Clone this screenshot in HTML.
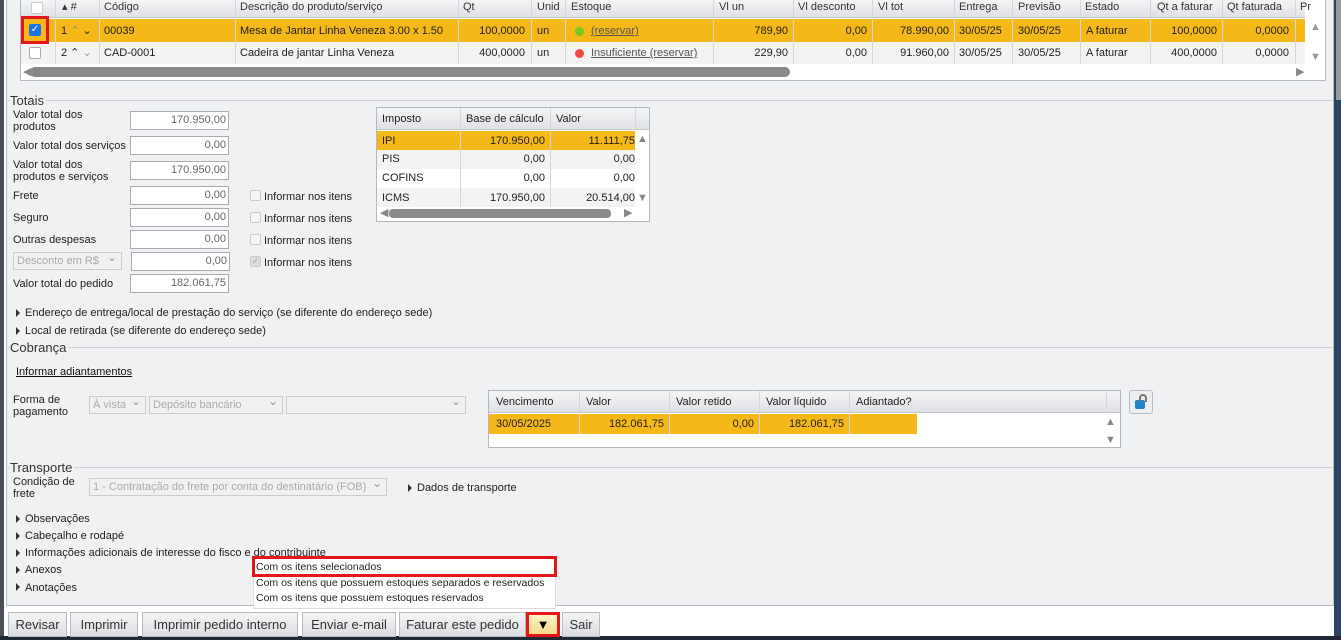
<!DOCTYPE html>
<html><head><meta charset="utf-8"><style>
*{box-sizing:border-box;margin:0;padding:0}
body{width:1341px;height:640px;overflow:hidden;background:#fff;font-family:"Liberation Sans",Arial,sans-serif;font-size:11px;color:#222;position:relative}
.a{position:absolute}
.panel{left:6px;top:0;width:1328px;height:606px;background:#f0f1f3;border:1px solid #b9bcc2;border-top:none}
.grid{background:#fff;border:1px solid #b5b8bd}
.hd{background:linear-gradient(#f4f5f6,#dfe1e4);border-bottom:1px solid #c5c8cc}
.c{position:absolute;white-space:nowrap;line-height:22px}
.r{text-align:right}
.vl{position:absolute;width:1px;background:#d4d6da}
.y{background:#f4b919}
.inp{position:absolute;background:#fff;border:1px solid #a9acb1;height:19px;text-align:right;padding-right:2px;line-height:17px;color:#666}
.lbl{position:absolute;line-height:12px;white-space:nowrap}
.cb{position:absolute;width:11px;height:11px;border:1px solid #c8cacd;border-radius:2px;background:#f6f6f6}
.sel{position:absolute;border:1px solid #ccc;background:#f0f1f3;height:18px;color:#aaa;line-height:16px;padding-left:3px;white-space:nowrap}
.sel:after{content:"⌄";position:absolute;right:4px;top:-4px;color:#999;font-size:12px}
.tri{position:absolute;width:0;height:0;border-left:4px solid #333;border-top:4px solid transparent;border-bottom:4px solid transparent}
.leg{position:absolute;font-size:13px;color:#333;background:#f0f1f3;padding-right:2px}
.hr{position:absolute;height:1px;background:#d0d2d6}
.ar{position:absolute;color:#999;font-size:11px;line-height:11px}
.btn{position:absolute;top:612px;height:25px;border:1px solid #b8bbc0;background:linear-gradient(#f3f4f5,#dcdee1);font-size:13px;line-height:23px;text-align:center;color:#333}
</style></head><body>
<div class="a" style="left:0;top:0;width:4px;height:640px;background:#4a4f57"></div>
<div class="a" style="left:1334px;top:0;width:7px;height:640px;background:#2d4461"></div>
<div class="a" style="left:1336px;top:0;width:5px;height:100px;background:#9a9a9a"></div>
<div class="a panel"></div>
<div class="a" style="left:0;top:636px;width:1341px;height:4px;background:#1f2a36"></div>

<!-- items grid -->
<div class="a grid" style="left:20px;top:-1px;width:1306px;height:82px"></div>
<div class="a hd" style="left:21px;top:0;width:1284px;height:18px"></div>
<div class="a y" style="left:21px;top:19px;width:1284px;height:23px"></div>
<div class="a" style="left:21px;top:42px;width:1284px;height:22px;background:#f3f3f4"></div>
<div class="vl" style="left:55px;top:0;height:64px"></div><div class="vl" style="left:99px;top:0;height:64px"></div><div class="vl" style="left:235px;top:0;height:64px"></div><div class="vl" style="left:458px;top:0;height:64px"></div><div class="vl" style="left:531px;top:0;height:64px"></div><div class="vl" style="left:565px;top:0;height:64px"></div><div class="vl" style="left:713px;top:0;height:64px"></div><div class="vl" style="left:793px;top:0;height:64px"></div><div class="vl" style="left:872px;top:0;height:64px"></div><div class="vl" style="left:954px;top:0;height:64px"></div><div class="vl" style="left:1012px;top:0;height:64px"></div><div class="vl" style="left:1080px;top:0;height:64px"></div><div class="vl" style="left:1150px;top:0;height:64px"></div><div class="vl" style="left:1222px;top:0;height:64px"></div><div class="vl" style="left:1295px;top:0;height:64px"></div>
<div style="position:absolute;top:-4px;left:0;height:22px;width:1341px;color:#333">
<div class="cb" style="left:31px;top:6px;width:12px;height:12px;background:#fff"></div>
<div class="c" style="left:62px">▴ #</div><div class="c" style="left:104px">Código</div><div class="c" style="left:240px">Descrição do produto/serviço</div><div class="c" style="left:463px">Qt</div><div class="c" style="left:537px">Unid</div><div class="c" style="left:571px">Estoque</div><div class="c" style="left:719px">Vl un</div><div class="c" style="left:798px">Vl desconto</div><div class="c" style="left:878px">Vl tot</div><div class="c" style="left:959px">Entrega</div><div class="c" style="left:1018px">Previsão</div><div class="c" style="left:1085px">Estado</div><div class="c" style="left:1157px">Qt a faturar</div><div class="c" style="left:1227px">Qt faturada</div><div class="c" style="left:1300px">Pr</div>
</div>
<div style="position:absolute;top:20px;left:0;height:22px;width:1341px">
<div class="a" style="left:21px;top:-4px;width:28px;height:28px;border:3px solid #e4161b"></div>
<div class="a" style="left:29px;top:4px;width:12px;height:12px;background:#1a73e8;border-radius:2px;color:#fff;font-size:10px;line-height:12px;text-align:center">✓</div>
<div class="c" style="left:61px">1 <span style="color:#888">⌃</span> ⌄</div><div class="c" style="left:104px">00039</div><div class="c" style="left:240px">Mesa de Jantar Linha Veneza 3.00 x 1.50</div><div class="c r" style="left:458px;width:67px">100,0000</div><div class="c" style="left:537px">un</div>
<div class="a" style="left:575px;top:7px;width:9px;height:9px;border-radius:50%;background:#7ac51f"></div><div class="c" style="left:591px;text-decoration:underline;color:#555">(reservar)</div>
<div class="c r" style="left:713px;width:75px">789,90</div><div class="c r" style="left:793px;width:74px">0,00</div><div class="c r" style="left:872px;width:77px">78.990,00</div><div class="c" style="left:959px">30/05/25</div><div class="c" style="left:1018px">30/05/25</div><div class="c" style="left:1086px">A faturar</div><div class="c r" style="left:1150px;width:67px">100,0000</div><div class="c r" style="left:1222px;width:67px">0,0000</div>
</div>
<div style="position:absolute;top:42px;left:0;height:22px;width:1341px">
<div class="cb" style="left:29px;top:5px;width:12px;height:12px;background:#fff;border-color:#aaa"></div>
<div class="c" style="left:61px">2 ⌃ <span style="color:#999">⌄</span></div><div class="c" style="left:104px">CAD-0001</div><div class="c" style="left:240px">Cadeira de jantar Linha Veneza</div><div class="c r" style="left:458px;width:67px">400,0000</div><div class="c" style="left:537px">un</div>
<div class="a" style="left:575px;top:7px;width:9px;height:9px;border-radius:50%;background:#f04848"></div><div class="c" style="left:591px;text-decoration:underline;color:#555">Insuficiente (reservar)</div>
<div class="c r" style="left:713px;width:75px">229,90</div><div class="c r" style="left:793px;width:74px">0,00</div><div class="c r" style="left:872px;width:77px">91.960,00</div><div class="c" style="left:959px">30/05/25</div><div class="c" style="left:1018px">30/05/25</div><div class="c" style="left:1086px">A faturar</div><div class="c r" style="left:1150px;width:67px">400,0000</div><div class="c r" style="left:1222px;width:67px">0,0000</div>
</div>
<div class="ar" style="left:1310px;top:22px">▲</div><div class="ar" style="left:1310px;top:52px">▼</div>
<div class="ar" style="left:23px;top:67px;color:#888">◀</div><div class="ar" style="left:1296px;top:67px;color:#888">▶</div>
<div class="a" style="left:30px;top:67px;width:760px;height:10px;border-radius:5px;background:#8a8a8a"></div>

<!-- Totais -->
<div class="hr" style="left:8px;top:100px;width:1325px"></div>
<div class="leg" style="left:10px;top:93px">Totais</div>
<div class="lbl" style="left:13px;top:109px">Valor total dos<br>produtos</div><div class="inp" style="left:130px;top:111px;width:99px">170.950,00</div>
<div class="lbl" style="left:13px;top:140px">Valor total dos serviços</div><div class="inp" style="left:130px;top:136px;width:99px">0,00</div>
<div class="lbl" style="left:13px;top:159px">Valor total dos<br>produtos e serviços</div><div class="inp" style="left:130px;top:161px;width:99px">170.950,00</div>
<div class="lbl" style="left:13px;top:190px">Frete</div><div class="inp" style="left:130px;top:186px;width:99px">0,00</div>
<div class="lbl" style="left:13px;top:212px">Seguro</div><div class="inp" style="left:130px;top:208px;width:99px">0,00</div>
<div class="lbl" style="left:13px;top:234px">Outras despesas</div><div class="inp" style="left:130px;top:230px;width:99px">0,00</div>
<div class="sel" style="left:13px;top:252px;width:109px;height:18px">Desconto em R$</div><div class="inp" style="left:131px;top:252px;width:99px">0,00</div>
<div class="lbl" style="left:13px;top:278px">Valor total do pedido</div><div class="inp" style="left:130px;top:274px;width:99px">182.061,75</div>
<div class="cb" style="left:250px;top:190px"></div><div class="lbl" style="left:264px;top:191px">Informar nos itens</div>
<div class="cb" style="left:250px;top:212px"></div><div class="lbl" style="left:264px;top:213px">Informar nos itens</div>
<div class="cb" style="left:250px;top:234px"></div><div class="lbl" style="left:264px;top:235px">Informar nos itens</div>
<div class="cb" style="left:250px;top:256px;background:#ddd;color:#aaa;font-size:9px;line-height:9px;text-align:center">✓</div><div class="lbl" style="left:264px;top:257px">Informar nos itens</div>

<!-- tax grid -->
<div class="a grid" style="left:376px;top:107px;width:274px;height:115px"></div>
<div class="a hd" style="left:377px;top:108px;width:272px;height:22px"></div>
<div class="a y" style="left:377px;top:131px;width:258px;height:19px"></div>
<div class="a" style="left:377px;top:150px;width:258px;height:19px;background:#f3f3f4"></div>
<div class="a" style="left:377px;top:188px;width:258px;height:19px;background:#f3f3f4"></div>
<div class="vl" style="left:460px;top:108px;height:99px"></div><div class="vl" style="left:550px;top:108px;height:99px"></div><div class="vl" style="left:635px;top:108px;height:22px"></div>
<div class="c" style="left:382px;top:108px">Imposto</div><div class="c" style="left:466px;top:108px">Base de cálculo</div><div class="c" style="left:556px;top:108px">Valor</div>
<div class="c" style="left:382px;top:130px">IPI</div><div class="c r" style="left:460px;top:130px;width:85px">170.950,00</div><div class="c r" style="left:550px;top:130px;width:85px">11.111,75</div>
<div class="c" style="left:382px;top:148px">PIS</div><div class="c r" style="left:460px;top:148px;width:85px">0,00</div><div class="c r" style="left:550px;top:148px;width:85px">0,00</div>
<div class="c" style="left:382px;top:167px">COFINS</div><div class="c r" style="left:460px;top:167px;width:85px">0,00</div><div class="c r" style="left:550px;top:167px;width:85px">0,00</div>
<div class="c" style="left:382px;top:187px">ICMS</div><div class="c r" style="left:460px;top:187px;width:85px">170.950,00</div><div class="c r" style="left:550px;top:187px;width:85px">20.514,00</div>
<div class="ar" style="left:637px;top:134px;color:#888">▲</div><div class="ar" style="left:637px;top:193px;color:#888">▼</div>
<div class="ar" style="left:380px;top:208px;color:#888">◀</div><div class="ar" style="left:624px;top:208px;color:#888">▶</div>
<div class="a" style="left:389px;top:209px;width:222px;height:9px;border-radius:4px;background:#8a8a8a"></div>

<div class="tri" style="left:16px;top:309px"></div><div class="lbl" style="left:25px;top:307px">Endereço de entrega/local de prestação do serviço (se diferente do endereço sede)</div>
<div class="tri" style="left:16px;top:327px"></div><div class="lbl" style="left:25px;top:325px">Local de retirada (se diferente do endereço sede)</div>

<!-- Cobrança -->
<div class="hr" style="left:8px;top:347px;width:1325px"></div>
<div class="leg" style="left:10px;top:340px">Cobrança</div>
<div class="lbl" style="left:16px;top:366px;text-decoration:underline;color:#111">Informar adiantamentos</div>
<div class="lbl" style="left:13px;top:394px">Forma de<br>pagamento</div>
<div class="sel" style="left:89px;top:396px;width:57px">À vista</div>
<div class="sel" style="left:149px;top:396px;width:134px">Depósito bancário</div>
<div class="sel" style="left:286px;top:396px;width:180px"></div>
<div class="a grid" style="left:488px;top:390px;width:633px;height:58px"></div>
<div class="a hd" style="left:489px;top:391px;width:631px;height:22px"></div>
<div class="a y" style="left:489px;top:414px;width:428px;height:20px"></div>
<div class="vl" style="left:579px;top:391px;height:43px"></div><div class="vl" style="left:669px;top:391px;height:43px"></div><div class="vl" style="left:759px;top:391px;height:43px"></div><div class="vl" style="left:849px;top:391px;height:43px"></div><div class="vl" style="left:1106px;top:391px;height:22px"></div>
<div class="c" style="left:496px;top:391px">Vencimento</div><div class="c" style="left:586px;top:391px">Valor</div><div class="c" style="left:676px;top:391px">Valor retido</div><div class="c" style="left:766px;top:391px">Valor líquido</div><div class="c" style="left:856px;top:391px">Adiantado?</div>
<div class="c" style="left:496px;top:413px">30/05/2025</div><div class="c r" style="left:579px;top:413px;width:85px">182.061,75</div><div class="c r" style="left:669px;top:413px;width:85px">0,00</div><div class="c r" style="left:759px;top:413px;width:85px">182.061,75</div>
<div class="ar" style="left:1105px;top:417px;color:#888">▲</div><div class="ar" style="left:1105px;top:435px;color:#888">▼</div>
<div class="a" style="left:1129px;top:390px;width:24px;height:24px;border:1px solid #b8bbc0;border-radius:3px;background:#eceef0"></div>
<div class="a" style="left:1135px;top:400px;width:10px;height:9px;background:#1e86c8;border-radius:2px"></div>
<div class="a" style="left:1139px;top:394px;width:8px;height:8px;border:2px solid #777;border-bottom:none;border-radius:4px 4px 0 0"></div>

<!-- Transporte -->
<div class="hr" style="left:8px;top:467px;width:1325px"></div>
<div class="leg" style="left:10px;top:460px">Transporte</div>
<div class="lbl" style="left:13px;top:476px">Condição de<br>frete</div>
<div class="sel" style="left:89px;top:478px;width:298px">1 - Contratação do frete por conta do destinatário (FOB)</div>
<div class="tri" style="left:408px;top:484px"></div><div class="lbl" style="left:417px;top:482px">Dados de transporte</div>
<div class="tri" style="left:16px;top:515px"></div><div class="lbl" style="left:25px;top:513px">Observações</div>
<div class="tri" style="left:16px;top:532px"></div><div class="lbl" style="left:25px;top:530px">Cabeçalho e rodapé</div>
<div class="tri" style="left:16px;top:549px"></div><div class="lbl" style="left:25px;top:547px">Informações adicionais de interesse do fisco e do contribuinte</div>
<div class="tri" style="left:16px;top:566px"></div><div class="lbl" style="left:25px;top:564px">Anexos</div>
<div class="tri" style="left:16px;top:583px"></div><div class="lbl" style="left:25px;top:582px">Anotações</div>

<!-- dropdown -->
<div class="a" style="left:253px;top:556px;width:303px;height:53px;background:#fff;border:1px solid #ddd"></div>
<div class="a" style="left:252px;top:556px;width:305px;height:21px;border:3px solid #e4161b"></div>
<div class="lbl" style="left:256px;top:561px;font-size:10.5px">Com os itens selecionados</div>
<div class="lbl" style="left:256px;top:577px;font-size:10.5px">Com os itens que possuem estoques separados e reservados</div>
<div class="lbl" style="left:256px;top:592px;font-size:10.5px">Com os itens que possuem estoques reservados</div>

<!-- buttons -->
<div class="btn" style="left:8px;width:59px">Revisar</div>
<div class="btn" style="left:70px;width:68px">Imprimir</div>
<div class="btn" style="left:142px;width:156px">Imprimir pedido interno</div>
<div class="btn" style="left:302px;width:94px">Enviar e-mail</div>
<div class="btn" style="left:399px;width:127px">Faturar este pedido</div>
<div class="btn" style="left:526px;width:34px;background:linear-gradient(#fdf3c8,#f6dc8a);border:3px solid #e4161b;line-height:19px;color:#000">▼</div>
<div class="btn" style="left:562px;width:38px">Sair</div>
</body></html>
